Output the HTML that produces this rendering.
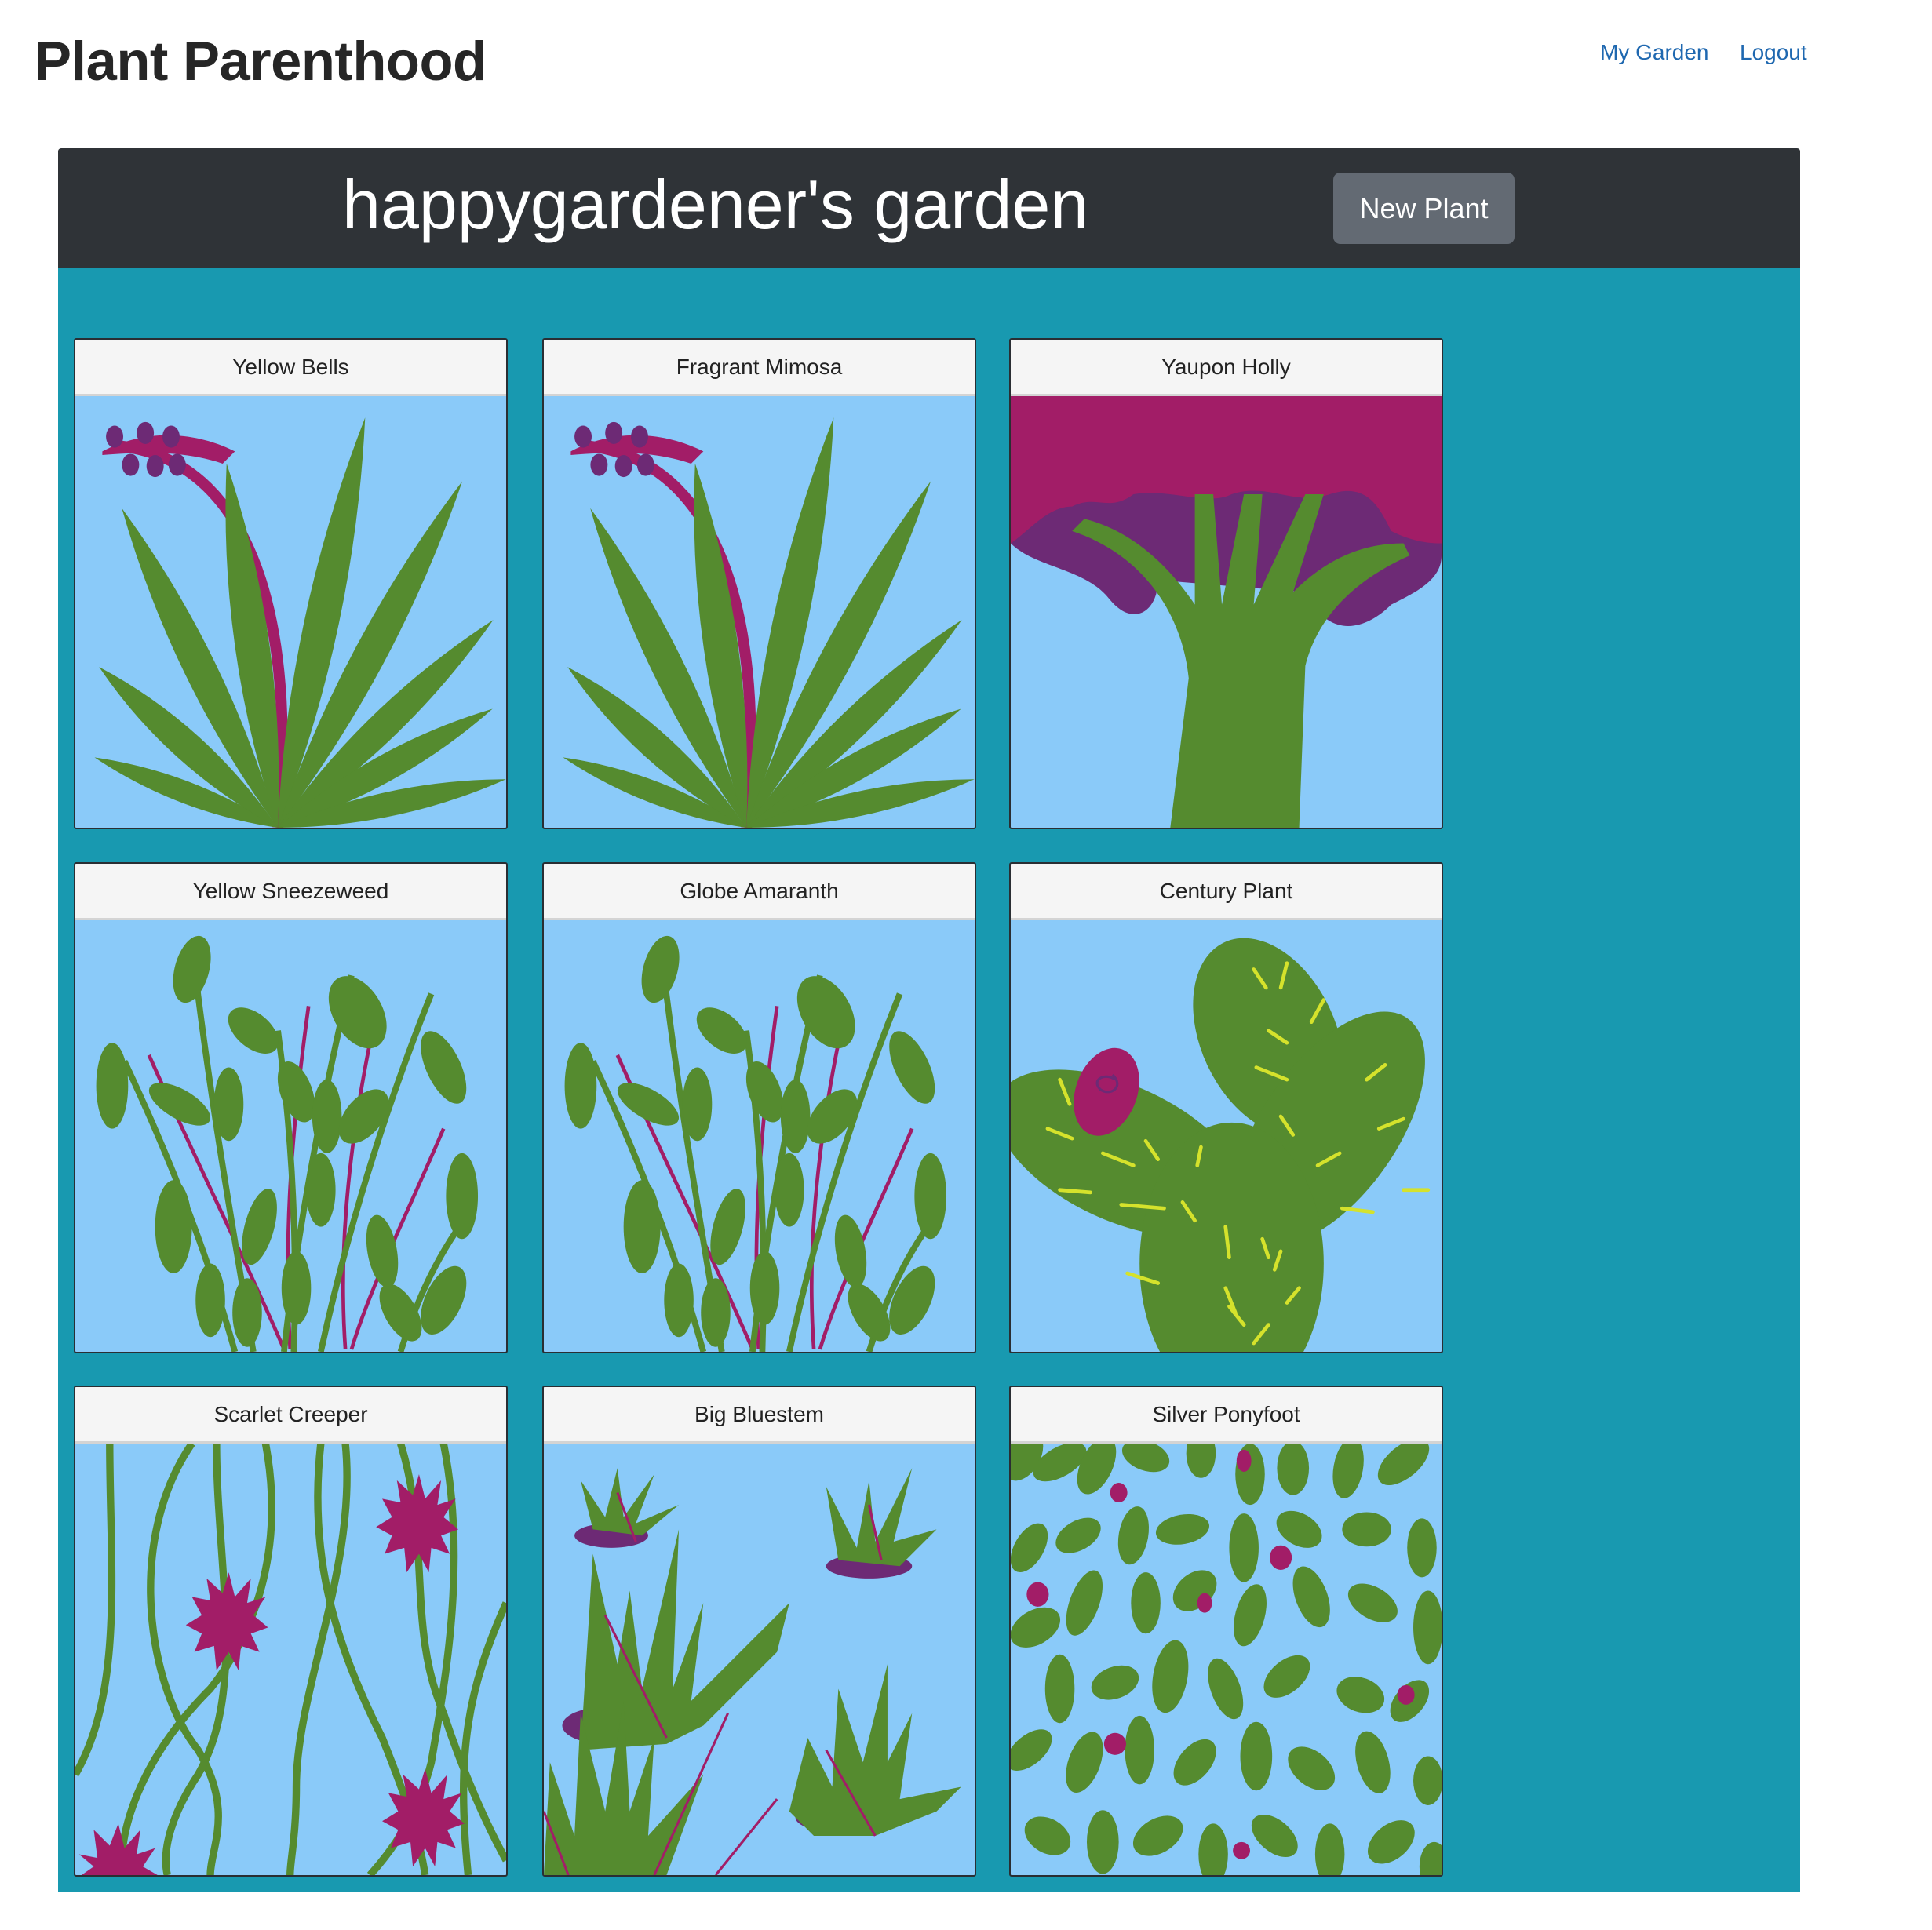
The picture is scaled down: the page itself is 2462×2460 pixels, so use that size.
<!DOCTYPE html>
<html><head><meta charset="utf-8"><style>
*{box-sizing:border-box;margin:0;padding:0}
body{width:2462px;height:2460px;background:#fff;font-family:"Liberation Sans",sans-serif;position:relative;overflow:hidden}
.t{position:absolute;left:44px;top:37px;font-size:70.5px;font-weight:bold;color:#262626;letter-spacing:-0.5px}
.nav{position:absolute;top:51px;font-size:28px;color:#1f68b0}
.hdr{position:absolute;left:74px;top:189px;width:2220px;height:152px;background:#2f3337;border-radius:4px 4px 0 0}
.hdr h1{position:absolute;left:362px;top:21px;font-size:88px;font-weight:normal;color:#fff;white-space:nowrap}
.btn{position:absolute;left:1625px;top:31px;width:231px;height:91px;background:#636a73;border-radius:9px;color:#fff;font-size:36px;text-align:center;line-height:91px}
.main{position:absolute;left:74px;top:341px;width:2220px;height:2070px;background:#1899b0}
.card{position:absolute;width:553px;height:626px;border:2px solid #2a2e33;border-radius:3px;background:#8acaf9;overflow:hidden}
.card .h{height:72px;background:#f5f5f5;border-bottom:3px solid #d4d4d4;text-align:center;font-size:28px;line-height:70px;color:#222}
.card svg{display:block;width:549px;height:550px}
</style></head><body>
<div class="t">Plant Parenthood</div>
<div class="nav" style="left:2039px">My Garden</div>
<div class="nav" style="left:2217px">Logout</div>
<div class="hdr"><h1>happygardener's garden</h1><div class="btn">New Plant</div></div>
<div class="main"></div>

<svg width="0" height="0" style="position:absolute">
<defs>
<g id="bells">
<path d="M165,352 C178,220 160,50 30,40" stroke="#a21d67" stroke-width="9" fill="none"/>
<path d="M22,45 C60,25 100,30 130,45 L120,55 C90,45 60,45 22,48Z" fill="#a21d67"/>
<g fill="#6d2a75"><ellipse cx="32" cy="33" rx="7" ry="9"/><ellipse cx="57" cy="30" rx="7" ry="9"/><ellipse cx="78" cy="33" rx="7" ry="9"/><ellipse cx="45" cy="56" rx="7" ry="9"/><ellipse cx="65" cy="57" rx="7" ry="9"/><ellipse cx="83" cy="56" rx="7" ry="9"/></g>
<g fill="#558b2f">
<g transform="translate(165,352) rotate(201)"><path d="M0,0 Q80,-18 160,0 Q80,18 0,0Z"/></g>
<g transform="translate(165,352) rotate(222)"><path d="M0,0 Q100,-24 196,0 Q100,24 0,0Z"/></g>
<g transform="translate(165,352) rotate(244)"><path d="M0,0 Q145,-26 290,0 Q145,26 0,0Z"/></g>
<g transform="translate(165,352) rotate(262)"><path d="M0,0 Q150,-28 300,0 Q150,28 0,0Z"/></g>
<g transform="translate(165,352) rotate(282)"><path d="M0,0 Q170,-28 342,0 Q170,28 0,0Z"/></g>
<g transform="translate(165,352) rotate(298)"><path d="M0,0 Q160,-26 320,0 Q160,26 0,0Z"/></g>
<g transform="translate(165,352) rotate(316)"><path d="M0,0 Q120,-24 244,0 Q120,24 0,0Z"/></g>
<g transform="translate(165,352) rotate(331)"><path d="M0,0 Q100,-22 200,0 Q100,22 0,0Z"/></g>
<g transform="translate(165,352) rotate(348)"><path d="M0,0 Q95,-20 190,0 Q95,20 0,0Z"/></g>
</g>
</g>
<g id="sneeze">
<g stroke="#a21d67" stroke-width="3" fill="none"><path d="M60,110 C100,200 140,280 170,350"/><path d="M190,70 C175,180 170,260 175,350"/><path d="M240,100 C220,200 215,280 220,350"/><path d="M300,170 C270,240 240,300 225,350"/></g>
<g stroke="#558b2f" stroke-width="5" fill="none"><path d="M95,20 C110,150 130,260 145,352"/><path d="M40,115 C80,200 110,280 130,352"/><path d="M225,45 C200,150 180,260 170,352"/><path d="M290,60 C250,160 220,260 200,352"/><path d="M320,240 C290,280 275,320 265,352"/><path d="M165,90 C180,200 180,290 178,352"/></g>
<g fill="#558b2f">
<ellipse cx="95" cy="40" rx="14" ry="28" transform="rotate(15 95 40)"/><ellipse cx="30" cy="135" rx="13" ry="35"/><ellipse cx="85" cy="150" rx="12" ry="28" transform="rotate(-60 85 150)"/><ellipse cx="145" cy="90" rx="14" ry="24" transform="rotate(-50 145 90)"/><ellipse cx="125" cy="150" rx="12" ry="30"/><ellipse cx="80" cy="250" rx="15" ry="38"/><ellipse cx="110" cy="310" rx="12" ry="30"/><ellipse cx="150" cy="250" rx="12" ry="32" transform="rotate(15 150 250)"/><ellipse cx="180" cy="140" rx="13" ry="26" transform="rotate(-20 180 140)"/><ellipse cx="230" cy="75" rx="20" ry="32" transform="rotate(-30 230 75)"/><ellipse cx="205" cy="160" rx="12" ry="30"/><ellipse cx="235" cy="160" rx="15" ry="26" transform="rotate(40 235 160)"/><ellipse cx="200" cy="220" rx="12" ry="30"/><ellipse cx="250" cy="270" rx="12" ry="30" transform="rotate(-10 250 270)"/><ellipse cx="300" cy="120" rx="14" ry="32" transform="rotate(-25 300 120)"/><ellipse cx="315" cy="225" rx="13" ry="35"/><ellipse cx="300" cy="310" rx="15" ry="30" transform="rotate(25 300 310)"/><ellipse cx="265" cy="320" rx="13" ry="26" transform="rotate(-30 265 320)"/><ellipse cx="180" cy="300" rx="12" ry="30"/><ellipse cx="140" cy="320" rx="12" ry="28"/></g>
</g>
</defs></svg>

<!-- Row 1 -->
<div class="card" style="left:94px;top:431px"><div class="h">Yellow Bells</div><svg viewBox="0 0 351 352" preserveAspectRatio="none"><use href="#bells"/></svg></div>
<div class="card" style="left:691px;top:431px"><div class="h">Fragrant Mimosa</div><svg viewBox="0 0 351 352" preserveAspectRatio="none"><use href="#bells"/></svg></div>
<div class="card" style="left:1286px;top:431px"><div class="h">Yaupon Holly</div><svg viewBox="0 0 351 352" preserveAspectRatio="none">
<path d="M0,120 C20,140 60,140 80,165 C100,190 120,175 120,150 L240,160 C260,200 290,190 310,170 C330,160 351,150 351,130 L351,0 L0,0Z" fill="#6d2a75"/>
<path d="M0,120 C15,110 30,90 50,90 C70,80 80,95 100,80 C130,75 160,90 180,80 C210,70 230,90 260,80 C290,70 300,90 310,110 C330,120 345,120 351,120 L351,0 L0,0Z" fill="#a21d67"/>
<path d="M130,352 L145,230 C140,180 110,130 50,110 L60,100 C100,110 130,140 150,170 L150,80 L165,80 L172,170 L190,80 L205,80 L198,170 L240,80 L255,80 L230,160 C260,130 290,120 320,120 L325,130 C280,150 250,180 240,220 L235,352Z" fill="#558b2f"/>
</svg></div>

<!-- Row 2 -->
<div class="card" style="left:94px;top:1099px"><div class="h">Yellow Sneezeweed</div><svg viewBox="0 0 351 352" preserveAspectRatio="none"><use href="#sneeze"/></svg></div>
<div class="card" style="left:691px;top:1099px"><div class="h">Globe Amaranth</div><svg viewBox="0 0 351 352" preserveAspectRatio="none"><use href="#sneeze"/></svg></div>
<div class="card" style="left:1286px;top:1099px"><div class="h">Century Plant</div><svg viewBox="0 0 351 352" preserveAspectRatio="none">
<g fill="#558b2f">
<ellipse cx="210" cy="95" rx="55" ry="85" transform="rotate(-25 210 95)"/>
<ellipse cx="260" cy="170" rx="55" ry="110" transform="rotate(35 260 170)"/>
<ellipse cx="90" cy="190" rx="110" ry="55" transform="rotate(25 90 190)"/>
<ellipse cx="180" cy="280" rx="75" ry="115"/>
</g>
<ellipse cx="78" cy="140" rx="25" ry="37" transform="rotate(20 78 140)" fill="#a21d67"/>
<path d="M85,130 c-8,-6 -20,0 -12,8 c8,6 20,-2 10,-12" stroke="#6d2a75" stroke-width="2" fill="none"/>
<g stroke="#d5e22c" stroke-width="3" stroke-linecap="round">
<path d="M198,40 l10,15"/><path d="M225,35 l-5,20"/><path d="M255,65 l-10,18"/><path d="M210,90 l15,10"/><path d="M200,120 l25,10"/><path d="M290,130 l15,-12"/><path d="M250,200 l18,-10"/><path d="M300,170 l20,-8"/><path d="M270,235 l25,3"/><path d="M320,220 l20,0"/><path d="M220,160 l10,15"/><path d="M30,170 l20,8"/><path d="M75,190 l25,10"/><path d="M110,180 l10,15"/><path d="M40,220 l25,2"/><path d="M90,232 l35,3"/><path d="M140,230 l10,15"/><path d="M175,250 l3,25"/><path d="M205,260 l5,15"/><path d="M235,300 l-10,12"/><path d="M210,330 l-12,15"/><path d="M190,330 l-12,-15"/><path d="M175,300 l8,20"/><path d="M220,270 l-5,15"/><path d="M40,130 l8,20"/><path d="M155,185 l-3,15"/><path d="M95,288 l25,8"/></g>
</svg></div>

<!-- Row 3 -->
<div class="card" style="left:94px;top:1766px"><div class="h">Scarlet Creeper</div><svg viewBox="0 0 351 352" preserveAspectRatio="none">
<g stroke="#558b2f" stroke-width="6" fill="none">
<path d="M28,0 C28,100 40,200 0,270"/><path d="M95,0 C40,80 60,200 100,250 C130,300 110,330 110,352"/>
<path d="M115,0 C115,100 140,200 100,270 C80,300 70,330 75,352"/>
<path d="M155,0 C170,80 150,150 110,200 C50,260 35,320 38,352"/>
<path d="M200,0 C190,90 210,160 250,240 C270,290 280,320 285,352"/>
<path d="M220,0 C230,100 180,200 180,280 C180,320 175,340 175,352"/>
<path d="M265,0 C290,80 270,150 300,220 C320,280 340,320 351,340"/>
<path d="M300,0 C320,100 300,200 290,260 C280,300 260,330 240,352"/>
<path d="M351,130 C320,200 310,250 320,352"/>
</g>
<g fill="#a21d67">
<polygon points="280,25 285,45 298,30 295,50 310,45 300,60 312,70 298,75 305,90 290,85 288,105 280,90 270,105 268,85 252,90 258,75 245,68 258,60 250,45 265,48 262,30 275,42"/>
<polygon points="125,105 130,125 143,110 140,130 155,125 145,140 157,150 143,155 150,170 135,165 133,185 125,170 115,185 113,165 97,170 103,155 90,148 103,140 95,125 110,128 107,110 120,122"/>
<polygon points="285,265 290,285 303,270 300,290 315,285 305,300 317,310 303,315 310,330 295,325 293,345 285,330 275,345 273,325 257,330 263,315 250,308 263,300 255,285 270,288 267,270 280,282"/>
<polygon points="35,310 40,330 53,315 50,335 65,330 55,345 67,352 5,352 15,345 3,335 18,338 15,315 28,328"/>
</g></svg></div>

<div class="card" style="left:691px;top:1766px"><div class="h">Big Bluestem</div><svg viewBox="0 0 351 352" preserveAspectRatio="none">
<g fill="#6d2a75"><ellipse cx="55" cy="75" rx="30" ry="10"/><ellipse cx="265" cy="100" rx="35" ry="10"/><ellipse cx="50" cy="230" rx="35" ry="15"/><ellipse cx="240" cy="305" rx="35" ry="12"/></g>
<g fill="#558b2f">
<path d="M40,70 L30,30 L50,60 L60,20 L65,60 L90,25 L75,65 L110,50 L80,75Z"/>
<path d="M240,95 L230,35 L255,85 L265,30 L270,80 L300,20 L285,80 L320,70 L290,100Z"/>
<path d="M30,250 L40,90 L60,180 L70,120 L80,200 L110,70 L105,200 L130,130 L120,210 L200,130 L190,170 L130,230 L100,245Z"/>
<path d="M0,352 L5,260 L25,320 L30,220 L50,300 L65,210 L70,300 L90,240 L85,320 L130,270 L100,352Z"/>
<path d="M200,300 L215,240 L235,280 L240,200 L260,260 L280,180 L280,260 L300,220 L290,290 L340,280 L320,300 L270,320 L220,320Z"/>
</g>
<g stroke="#a21d67" stroke-width="2"><path d="M60,40 L75,80"/><path d="M265,50 L275,95"/><path d="M50,140 L100,240"/><path d="M0,300 L20,352"/><path d="M150,220 L90,352"/><path d="M230,250 L270,320"/><path d="M190,290 L140,352"/></g>
</svg></div>

<div class="card" style="left:1286px;top:1766px"><div class="h">Silver Ponyfoot</div><svg viewBox="0 0 351 352" preserveAspectRatio="none">
<g fill="#558b2f">
<ellipse cx="10" cy="10" rx="14" ry="22" transform="rotate(30 10 10)"/><ellipse cx="40" cy="15" rx="24" ry="12" transform="rotate(-30 40 15)"/><ellipse cx="70" cy="18" rx="13" ry="25" transform="rotate(25 70 18)"/><ellipse cx="110" cy="10" rx="20" ry="12" transform="rotate(20 110 10)"/><ellipse cx="155" cy="8" rx="12" ry="20"/><ellipse cx="195" cy="25" rx="12" ry="25"/><ellipse cx="230" cy="20" rx="13" ry="22"/><ellipse cx="275" cy="20" rx="12" ry="25" transform="rotate(10 275 20)"/><ellipse cx="320" cy="15" rx="25" ry="13" transform="rotate(-40 320 15)"/>
<ellipse cx="15" cy="85" rx="22" ry="12" transform="rotate(-60 15 85)"/><ellipse cx="55" cy="75" rx="20" ry="12" transform="rotate(-30 55 75)"/><ellipse cx="100" cy="75" rx="12" ry="24" transform="rotate(10 100 75)"/><ellipse cx="140" cy="70" rx="22" ry="12" transform="rotate(-10 140 70)"/><ellipse cx="190" cy="85" rx="12" ry="28"/><ellipse cx="235" cy="70" rx="20" ry="13" transform="rotate(30 235 70)"/><ellipse cx="290" cy="70" rx="20" ry="14"/><ellipse cx="335" cy="85" rx="12" ry="24"/>
<ellipse cx="20" cy="150" rx="22" ry="14" transform="rotate(-30 20 150)"/><ellipse cx="60" cy="130" rx="12" ry="28" transform="rotate(20 60 130)"/><ellipse cx="110" cy="130" rx="12" ry="25"/><ellipse cx="150" cy="120" rx="20" ry="14" transform="rotate(-40 150 120)"/><ellipse cx="195" cy="140" rx="12" ry="26" transform="rotate(15 195 140)"/><ellipse cx="245" cy="125" rx="13" ry="26" transform="rotate(-20 245 125)"/><ellipse cx="295" cy="130" rx="22" ry="13" transform="rotate(30 295 130)"/><ellipse cx="340" cy="150" rx="12" ry="30"/>
<ellipse cx="40" cy="200" rx="12" ry="28"/><ellipse cx="85" cy="195" rx="20" ry="13" transform="rotate(-20 85 195)"/><ellipse cx="130" cy="190" rx="14" ry="30" transform="rotate(10 130 190)"/><ellipse cx="175" cy="200" rx="12" ry="26" transform="rotate(-20 175 200)"/><ellipse cx="225" cy="190" rx="22" ry="13" transform="rotate(-40 225 190)"/><ellipse cx="285" cy="205" rx="20" ry="14" transform="rotate(20 285 205)"/><ellipse cx="325" cy="210" rx="20" ry="12" transform="rotate(-50 325 210)"/>
<ellipse cx="15" cy="250" rx="22" ry="12" transform="rotate(-40 15 250)"/><ellipse cx="60" cy="260" rx="13" ry="26" transform="rotate(20 60 260)"/><ellipse cx="105" cy="250" rx="12" ry="28"/><ellipse cx="150" cy="260" rx="22" ry="13" transform="rotate(-50 150 260)"/><ellipse cx="200" cy="255" rx="13" ry="28"/><ellipse cx="245" cy="265" rx="22" ry="14" transform="rotate(40 245 265)"/><ellipse cx="295" cy="260" rx="13" ry="26" transform="rotate(-15 295 260)"/><ellipse cx="340" cy="275" rx="12" ry="20"/>
<ellipse cx="30" cy="320" rx="20" ry="14" transform="rotate(30 30 320)"/><ellipse cx="75" cy="325" rx="13" ry="26"/><ellipse cx="120" cy="320" rx="22" ry="14" transform="rotate(-30 120 320)"/><ellipse cx="165" cy="335" rx="12" ry="25"/><ellipse cx="215" cy="320" rx="22" ry="13" transform="rotate(40 215 320)"/><ellipse cx="260" cy="335" rx="12" ry="25"/><ellipse cx="310" cy="325" rx="22" ry="14" transform="rotate(-40 310 325)"/><ellipse cx="345" cy="345" rx="12" ry="20"/>
</g>
<g fill="#a21d67"><ellipse cx="190" cy="14" rx="6" ry="9"/><ellipse cx="88" cy="40" rx="7" ry="8"/><ellipse cx="220" cy="93" rx="9" ry="10"/><ellipse cx="22" cy="123" rx="9" ry="10"/><ellipse cx="158" cy="130" rx="6" ry="8"/><ellipse cx="85" cy="245" rx="9" ry="9"/><ellipse cx="322" cy="205" rx="7" ry="8"/><ellipse cx="188" cy="332" rx="7" ry="7"/></g>
</svg></div>
</body></html>
